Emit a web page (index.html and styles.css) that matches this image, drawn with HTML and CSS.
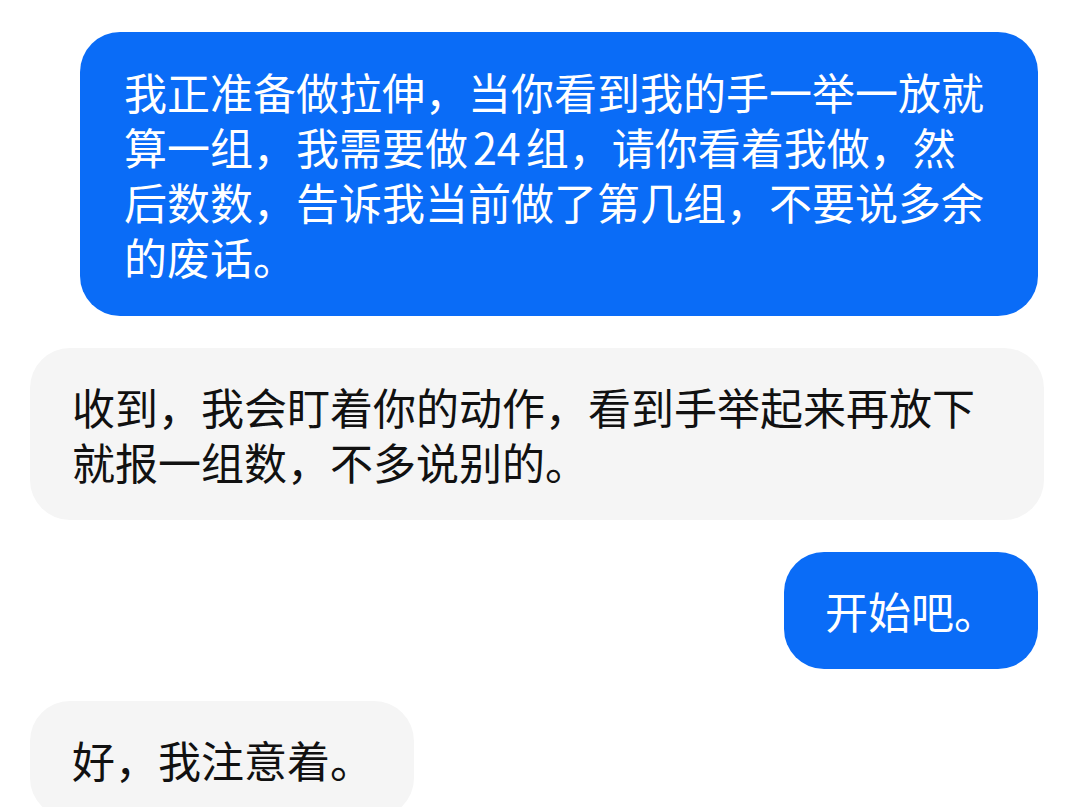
FILE: index.html
```html
<!DOCTYPE html>
<html lang="zh-CN">
<head>
    <meta charset="UTF-8">
    <meta name="viewport" content="width=device-width, initial-scale=1.0">
    <title>Chat</title>
    <link rel="stylesheet" href="styles.css">
</head>
<body>
    <div class="chat">
        <div class="msg msg-user msg-wide">我正准备做拉伸，当你看到我的手一举一放就算一组，我需要做<span class="num">24</span>组，请你看着我做，然后数数，告诉我当前做了第几组，不要说多余的废话。</div>
        <div class="msg msg-bot">收到，我会盯着你的动作，看到手举起来再放下就报一组数，不多说别的。</div>
        <div class="msg msg-user">开始吧。</div>
        <div class="msg msg-bot">好，我注意着。</div>
    </div>
</body>
</html>
```

FILE: styles.css
```css
body {
    margin: 0;
    background: #fff;
    font-family: "Noto Sans CJK SC", "Noto Sans", sans-serif;
}
.chat {
    display: flex;
    flex-direction: column;
    gap: 32px;
    padding: 32px 31px 0 30px;
    overflow: hidden;
    height: 775px;
}
.msg {
    font-size: 43px;
    line-height: 55px;
    padding: 31px 41px;
    border-radius: 40px;
    max-width: 931px;
    word-break: break-all;
}
.msg-user {
    align-self: flex-end;
    margin-right: 7px;
    background: #0a6cf7;
    color: #fff;
}
.msg-wide {
    width: 872px;
    padding: 32px 42px 32px 44px;
}
.msg-bot {
    align-self: flex-start;
    background: #f5f5f5;
    color: #111;
    padding-left: 42px;
}
.num {
    margin: 0 5px;
}
```
